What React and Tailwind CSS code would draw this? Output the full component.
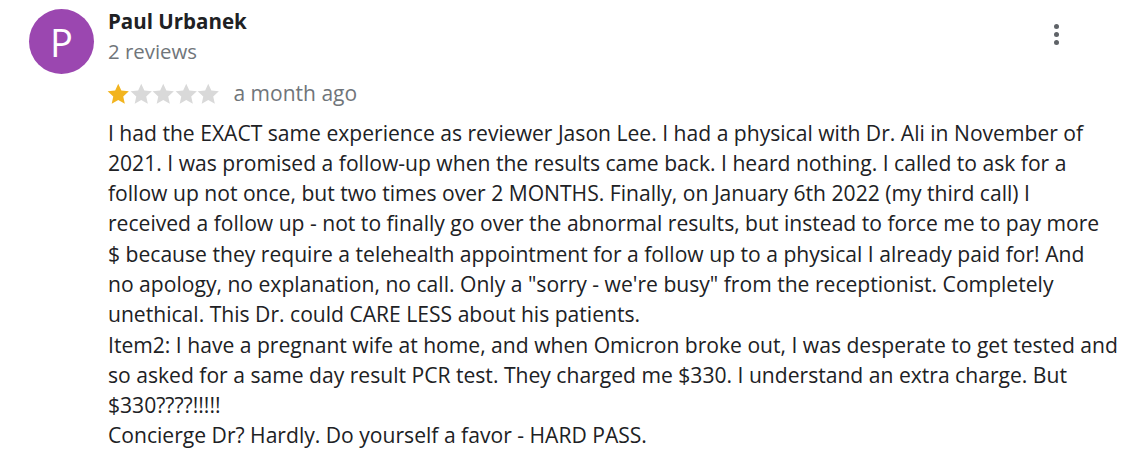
import React from 'react';

const Star = ({ filled }) => (
  <svg viewBox="0 0 24 24" className="w-[22.5px] h-[22.5px]">
    <path
      d="M12 0.8l3.3 7.3 8 .8-6 5.4 1.7 7.9L12 18.2l-7 4 1.7-7.9-6-5.4 8-.8z"
      fill={filled ? '#f2b41f' : '#d9d9d9'}
    />
  </svg>
);

// line breaks as they fall in the review card
const lines = [
  'I had the EXACT same experience as reviewer Jason Lee. I had a physical with Dr. Ali in November of',
  '2021. I was promised a follow-up when the results came back. I heard nothing. I called to ask for a',
  'follow up not once, but two times over 2 MONTHS. Finally, on January 6th 2022 (my third call) I',
  'received a follow up - not to finally go over the abnormal results, but instead to force me to pay more',
  '$ because they require a telehealth appointment for a follow up to a physical I already paid for! And',
  'no apology, no explanation, no call. Only a "sorry - we\'re busy" from the receptionist. Completely',
  'unethical. This Dr. could CARE LESS about his patients.',
  'Item2: I have a pregnant wife at home, and when Omicron broke out, I was desperate to get tested and',
  'so asked for a same day result PCR test. They charged me $330. I understand an extra charge. But',
  '$330????!!!!!',
  'Concierge Dr? Hardly. Do yourself a favor - HARD PASS.',
];

export default function App() {
  return (
    <div className="w-[1128px] h-[451px] bg-white overflow-hidden font-['Open_Sans',sans-serif] text-[#202124]">
      <div className="flex pl-[29px] pt-[9px]">
        <div className="w-[65px] h-[65px] rounded-full bg-[#9b47b0] flex items-center justify-center text-white text-[38px] leading-none shrink-0">
          P
        </div>
        <div className="ml-[14px] flex-1 min-w-0 pr-[16px]">
          <div className="flex justify-between">
            <div>
              <div className="text-[20.5px] font-bold leading-[26px] mt-[-1px]">Paul Urbanek</div>
              <div className="text-[20.4px] text-[#70757a] leading-[26px] mt-[4px]">2 reviews</div>
            </div>
            <div className="flex flex-col gap-[3px] items-center mt-[15px] mr-[53px]">
              <span className="w-[5px] h-[5px] rounded-full bg-[#5f6368]" />
              <span className="w-[5px] h-[5px] rounded-full bg-[#5f6368]" />
              <span className="w-[5px] h-[5px] rounded-full bg-[#5f6368]" />
            </div>
          </div>
          <div className="flex items-center mt-[14px] -ml-[1px]">
            <Star filled />
            <Star />
            <Star />
            <Star />
            <Star />
            <span className="ml-[14px] text-[21px] text-[#70757a]">a month ago</span>
          </div>
          <div className="mt-[8px] text-[21.1px] leading-[30.3px] whitespace-nowrap">
            {lines.map((l, i) => (
              <div key={i}>{l}</div>
            ))}
          </div>
        </div>
      </div>
    </div>
  );
}
